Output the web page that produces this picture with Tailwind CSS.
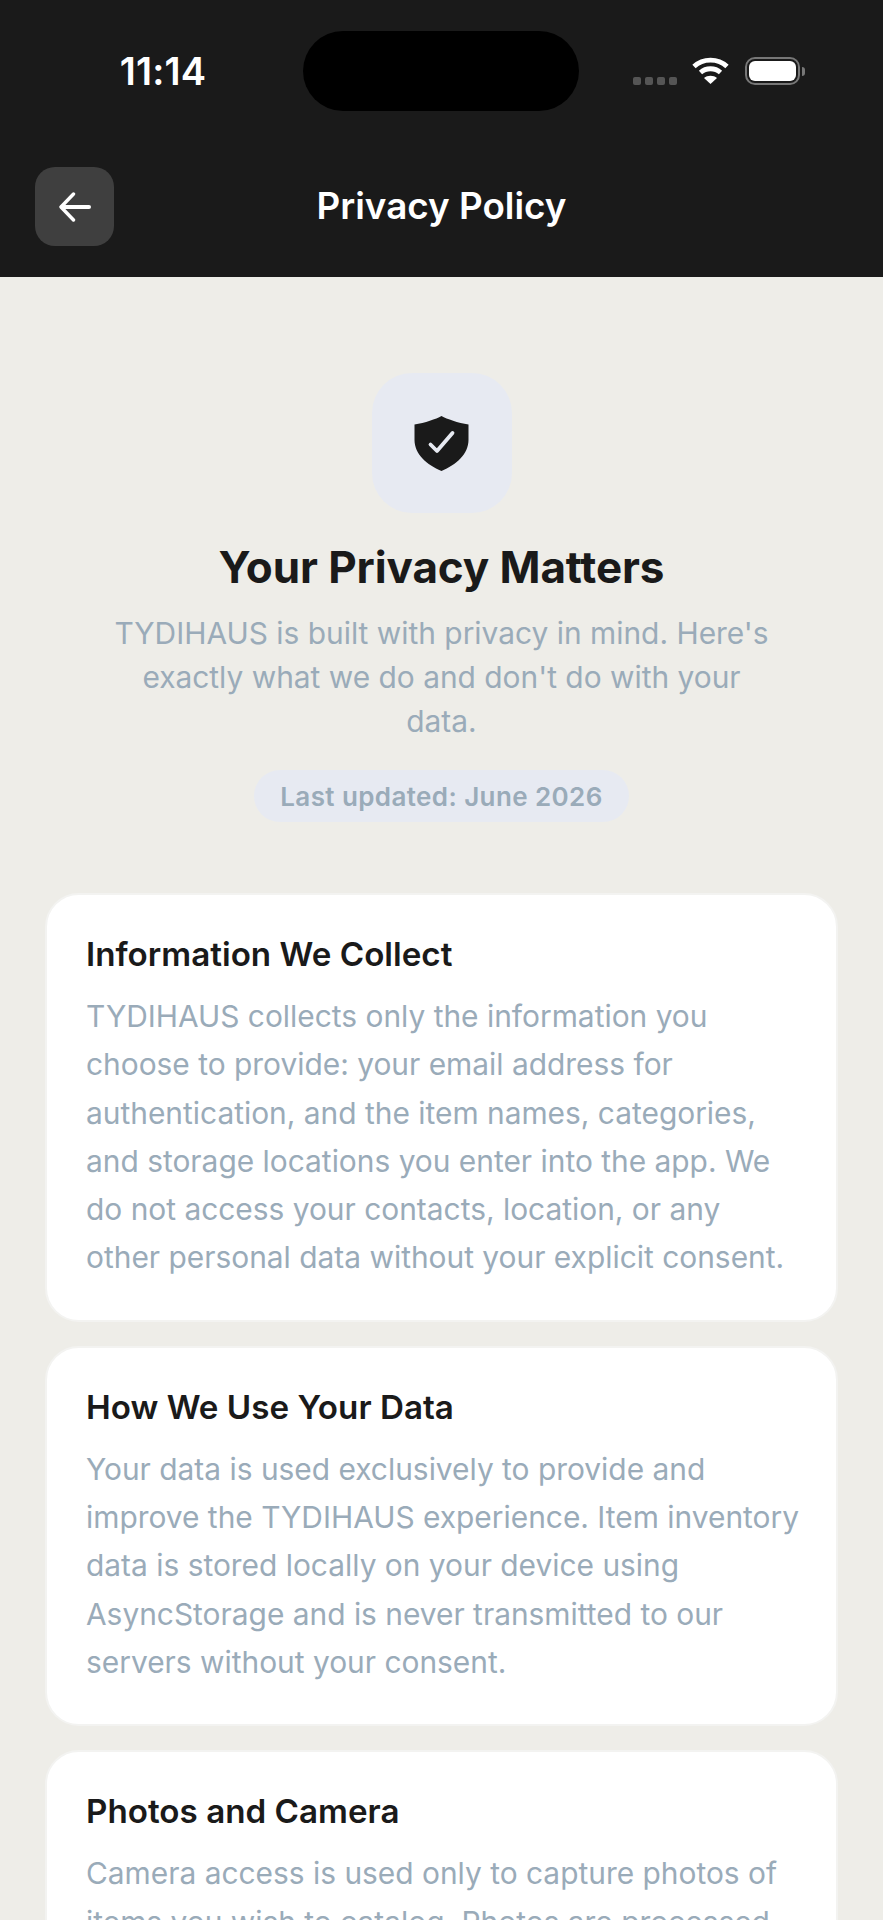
<!DOCTYPE html>
<html lang="en">
<head>
    <meta charset="UTF-8">
    <meta name="viewport" content="width=device-width, initial-scale=1.0">
    <title>Privacy Policy</title>
    <script src="https://cdn.jsdelivr.net/npm/@tailwindcss/browser@4"></script>
</head>
<body class="bg-[#eeede8]">
    <div class="h-[1920px] overflow-hidden font-['Inter',sans-serif]">
        <!-- Header -->
        <header class="bg-[#1a1a1a] h-[277px] flex flex-col">
            <div class="flex items-center h-[80px] mt-[31px]">
                <div class="w-[303px] pl-[23px] text-center text-white text-[38px] font-semibold leading-none tracking-[0.2px]">11:14</div>
                <div class="w-[276px] h-[80px] rounded-[40px] bg-black"></div>
                <div class="flex-1 flex items-center pl-[54px] gap-[16px]">
                    <div class="flex gap-[4px] mt-[20px] mr-[-1px]">
                        <span class="w-[8px] h-[8px] rounded-[2px] bg-[#555555]"></span>
                        <span class="w-[8px] h-[8px] rounded-[2px] bg-[#555555]"></span>
                        <span class="w-[8px] h-[8px] rounded-[2px] bg-[#555555]"></span>
                        <span class="w-[8px] h-[8px] rounded-[2px] bg-[#555555]"></span>
                    </div>
                    <svg class="w-[37px] h-[28px]" viewBox="0 0 37 28" fill="none">
                        <path d="M2 9.500C11 1 26 1 35 9.500" stroke="white" stroke-width="4.800"/>
                        <path d="M8.500 15.500C14 10.500 23 10.500 28.500 15.500" stroke="white" stroke-width="4.800"/>
                        <path d="M18.500 27L12 21C15.500 18 21.500 18 25 21Z" fill="white"/>
                    </svg>
                    <div class="flex items-center">
                        <div class="w-[55px] h-[28px] rounded-[10px] border-[2.500px] border-[#777777] p-[2px]">
                            <div class="w-full h-full rounded-[6px] bg-white"></div>
                        </div>
                        <div class="w-[3px] h-[9px] ml-[2px] rounded-r-full bg-[#777777]"></div>
                    </div>
                </div>
            </div>
            <div class="relative flex items-center justify-center h-[79px] mt-[56px]">
                <button class="absolute left-[35px] top-0 w-[79px] h-[79px] rounded-[20px] bg-[#3f3f3f] flex items-center justify-center">
                    <svg class="w-[32px] h-[30px]" viewBox="0 0 32 30" fill="none" stroke="white" stroke-linecap="round" stroke-linejoin="round">
                        <path d="M30 15H3" stroke-width="4"/>
                        <path d="M14.500 2L2 15L14.500 28" stroke-width="3.400"/>
                    </svg>
                </button>
                <h1 class="text-white text-[36.800px] font-semibold leading-none">Privacy Policy</h1>
            </div>
        </header>

        <!-- Intro -->
        <section class="flex flex-col items-center pt-[96px]">
            <div class="w-[140px] h-[140px] rounded-[40px] bg-[#e7eaf2] flex items-center justify-center">
                <svg class="w-[55px] h-[55px]" viewBox="0 0 55 55">
                    <path d="M27.500 0C33 3 44 7 54.500 8.500V24C54.500 38 42 49 27.500 55C13 49 0.500 38 0.500 24V8.500C11 7 22 3 27.500 0Z" fill="#1a1a1a"/>
                    <path d="M16.500 28.500L23 35L38.500 17" fill="none" stroke="#e7eaf2" stroke-width="3.800" stroke-linecap="round" stroke-linejoin="round"/>
                </svg>
            </div>
            <h2 class="mt-[28px] text-[44px] leading-[52px] font-bold text-[#1a1a1a] tracking-[-0.1px]">Your Privacy Matters</h2>
            <p class="mt-[18px] w-[665px] text-center text-[29.900px] leading-[44px] text-[#9aabb9]">TYDIHAUS is built with privacy in mind. Here's exactly what we do and don't do with your data.</p>
            <div class="mt-[27px] h-[52px] px-[26px] rounded-full bg-[#e7eaf2] flex items-center text-[26px] font-semibold text-[#9aabb9] tracking-[0.4px]">Last updated: June 2026</div>
        </section>

        <!-- Policy cards -->
        <section class="mt-[71px] px-[45px] flex flex-col gap-[24px]">
            <div class="bg-white rounded-[34px] border-2 border-[#f3f3f1] pl-[39px] pr-[35px] pt-[37px] pb-[38px]">
                <h3 class="text-[33.200px] leading-[44px] font-semibold text-[#1a1a1a]">Information We Collect</h3>
                <p class="mt-[16px] text-[29.900px] leading-[48.300px] text-[#9aabb9]">TYDIHAUS collects only the information you choose to provide: your email address for authentication, and the item names, categories, and storage locations you enter into the app. We do not access your contacts, location, or any other personal data without your explicit consent.</p>
            </div>
            <div class="bg-white rounded-[34px] border-2 border-[#f3f3f1] pl-[39px] pr-[35px] pt-[37px] pb-[38px]">
                <h3 class="text-[33.200px] leading-[44px] font-semibold text-[#1a1a1a]">How We Use Your Data</h3>
                <p class="mt-[16px] text-[29.900px] leading-[48.300px] text-[#9aabb9]">Your data is used exclusively to provide and improve the TYDIHAUS experience. Item inventory data is stored locally on your device using AsyncStorage and is never transmitted to our servers without your consent.</p>
            </div>
            <div class="bg-white rounded-[34px] border-2 border-[#f3f3f1] pl-[39px] pr-[35px] pt-[37px] pb-[38px]">
                <h3 class="text-[33.200px] leading-[44px] font-semibold text-[#1a1a1a]">Photos and Camera</h3>
                <p class="mt-[16px] text-[29.900px] leading-[48.300px] text-[#9aabb9]">Camera access is used only to capture photos of items you wish to catalog. Photos are processed on your device and are never shared.</p>
            </div>
        </section>
    </div>
</body>
</html>
